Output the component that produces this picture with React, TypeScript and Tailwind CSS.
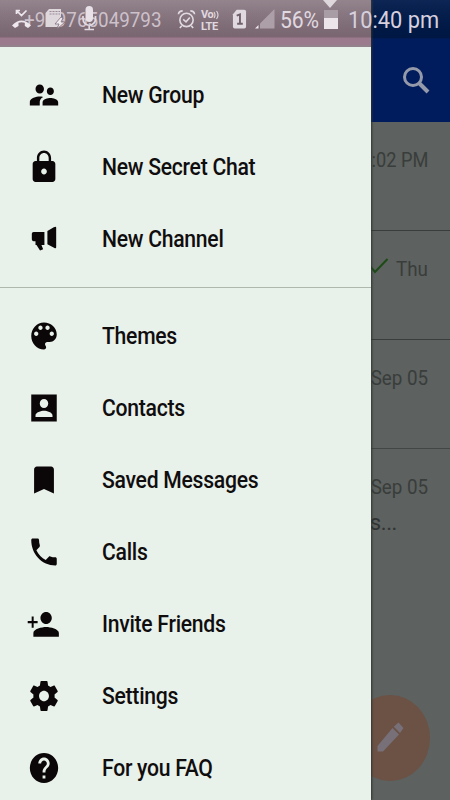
import React from 'react';

interface MenuEntry {
    label: string;
    path: string;
}

const chatEntries: MenuEntry[] = [
    {
        label: 'New Group',
        path: 'M16.5 12c1.38 0 2.49-1.12 2.49-2.5S17.88 7 16.5 7C15.12 7 14 8.12 14 9.5s1.12 2.5 2.5 2.5zM9 11c1.66 0 2.99-1.34 2.99-3S10.66 5 9 5C7.34 5 6 6.34 6 8s1.34 3 3 3zm7.5 3c-1.83 0-5.5.92-5.5 2.75V19h11v-2.25c0-1.83-3.67-2.75-5.5-2.75zM9 13c-2.33 0-7 1.17-7 3.5V19h7v-2.25c0-.85.33-2.34 2.37-3.47C10.5 13.1 9.66 13 9 13z',
    },
    {
        label: 'New Secret Chat',
        path: 'M18 8h-1V6c0-2.76-2.24-5-5-5S7 3.24 7 6v2H6c-1.1 0-2 .9-2 2v10c0 1.1.9 2 2 2h12c1.1 0 2-.9 2-2V10c0-1.1-.9-2-2-2zm-6 9c-1.1 0-2-.9-2-2s.9-2 2-2 2 .9 2 2-.9 2-2 2zM15.3 8H8.7V6c0-1.82 1.48-3.3 3.3-3.3s3.3 1.48 3.3 3.3v2z',
    },
    {
        label: 'New Channel',
        path: 'M4.7 7.3H12.3V16H10.2L11.4 18.8L9.2 19.7L6.7 16H6V13.5H4.7C3.8 13.5 3.4 12.8 3.4 12V8.7C3.4 7.8 3.9 7.3 4.7 7.3zM14.4 6.7L18.9 4.2Q20.6 3.4 20.6 4.4V17.5Q20.6 18.4 19.4 18L14.4 15.5z',
    },
];

const accountEntries: MenuEntry[] = [
    {
        label: 'Themes',
        path: 'M12 3c-4.97 0-9 4.03-9 9s4.03 9 9 9c.83 0 1.5-.67 1.5-1.5 0-.39-.15-.74-.39-1.01-.23-.26-.38-.61-.38-.99 0-.83.67-1.5 1.5-1.5H16c2.76 0 5-2.24 5-5 0-4.42-4.03-8-9-8zm-5.5 9c-.83 0-1.5-.67-1.5-1.5S5.67 9 6.5 9 8 9.67 8 10.5 7.33 12 6.5 12zm3-4C8.67 8 8 7.33 8 6.5S8.67 5 9.5 5s1.5.67 1.5 1.5S10.33 8 9.5 8zm5 0c-.83 0-1.5-.67-1.5-1.5S13.67 5 14.5 5s1.5.67 1.5 1.5S15.33 8 14.5 8zm3 4c-.83 0-1.5-.67-1.5-1.5S16.67 9 17.5 9s1.5.67 1.5 1.5-.67 1.5-1.5 1.5z',
    },
    {
        label: 'Contacts',
        path: 'M3 3h18v18H3zM15 9c0 1.66-1.34 3-3 3s-3-1.34-3-3 1.34-3 3-3 3 1.34 3 3zM6 17c0-2 4-3.1 6-3.1s6 1.1 6 3.1v1H6v-1z',
    },
    {
        label: 'Saved Messages',
        path: 'M17 3H7c-1.1 0-1.99.9-1.99 2L5 21l7-3 7 3V5c0-1.1-.9-2-2-2z',
    },
    {
        label: 'Calls',
        path: 'M6.62 10.79c1.44 2.83 3.76 5.14 6.59 6.59l2.2-2.2c.27-.27.67-.36 1.02-.24 1.12.37 2.33.57 3.57.57.55 0 1 .45 1 1V20c0 .55-.45 1-1 1-9.39 0-17-7.61-17-17 0-.55.45-1 1-1h3.5c.55 0 1 .45 1 1 0 1.25.2 2.45.57 3.57.11.35.03.74-.25 1.02l-2.2 2.2z',
    },
    {
        label: 'Invite Friends',
        path: 'M13.5 12c2.21 0 4-1.79 4-4s-1.79-4-4-4-4 1.79-4 4 1.79 4 4 4zM4.7 10V7H3.3v3H.5v1.5h2.8v3h1.4v-3h2.8V10zM13.5 14c-3 0-9 1.34-9 4v2.5h18V18c0-2.66-6-4-9-4z',
    },
    {
        label: 'Settings',
        path: 'M19.43 12.98c.04-.32.07-.64.07-.98s-.03-.66-.07-.98l2.11-1.65c.19-.15.24-.42.12-.64l-2-3.46c-.12-.22-.39-.3-.61-.22l-2.49 1c-.52-.4-1.08-.73-1.69-.98l-.38-2.65C14.46 2.18 14.25 2 14 2h-4c-.25 0-.46.18-.49.42l-.38 2.65c-.61.25-1.17.59-1.69.98l-2.49-1c-.23-.09-.49 0-.61.22l-2 3.46c-.13.22-.07.49.12.64l2.11 1.65c-.04.32-.07.65-.07.98s.03.66.07.98l-2.11 1.65c-.19.15-.24.42-.12.64l2 3.46c.12.22.39.3.61.22l2.49-1c.52.4 1.08.73 1.69.98l.38 2.65c.03.24.24.42.49.42h4c.25 0 .46-.18.49-.42l.38-2.65c.61-.25 1.17-.59 1.69-.98l2.49 1c.23.09.49 0 .61-.22l2-3.46c.12-.22.07-.49-.12-.64l-2.11-1.65zM12 15.5c-1.93 0-3.5-1.57-3.5-3.5s1.57-3.5 3.5-3.5 3.5 1.57 3.5 3.5-1.57 3.5-3.5 3.5z',
    },
    {
        label: 'For you FAQ',
        path: 'M12 2C6.48 2 2 6.48 2 12s4.48 10 10 10 10-4.48 10-10S17.52 2 12 2zm1 17h-2v-2h2v2zm2.07-7.75l-.9.92C13.45 12.9 13 13.5 13 15h-2v-.5c0-1.1.45-2.1 1.17-2.83l1.24-1.26c.37-.36.59-.86.59-1.41 0-1.1-.9-2-2-2s-2 .9-2 2H8c0-2.21 1.79-4 4-4s4 1.79 4 4c0 .88-.36 1.68-.93 2.25z',
    },
];

const MenuRow: React.FC<MenuEntry> = ({ label, path }) => (
    <li className="flex h-[72px] items-center pl-[27px]">
        <svg viewBox="0 0 24 24" preserveAspectRatio="none" className="h-[36px] w-[34px] fill-[#0b0708]">
            <path fillRule="evenodd" d={path} />
        </svg>
        <span className="ml-[41px] origin-left scale-x-[0.92] text-[23px] leading-none font-medium tracking-[-0.3px] whitespace-nowrap text-[#100d0e]">
            {label}
        </span>
    </li>
);

const StatusBar: React.FC = () => (
    <div className="absolute inset-x-0 top-0 flex h-[38px] items-center bg-linear-to-b from-white/5 to-black/10 text-[#e0d9e0]">
        {/* notification icons crowd over the number */}
        <div className="relative ml-[24px] w-[153px] shrink-0">
            <span className="block origin-left scale-x-[0.94] pt-[2px] text-[20px] leading-[38px] whitespace-nowrap text-[#cdc1cb]">+919765049793</span>
            <svg viewBox="0 0 90 30" className="absolute top-[6px] -left-[14px] h-[30px] w-[90px]">
                <path d="M2 20.5Q11.5 10.5 21 20.5L18 23L14.8 21V17.8Q11.5 16.8 8.5 17.8V21L5 23z" fill="#eee8ee" />
                <path d="M6.5 5.5L11.5 10.5L16.5 5.5M6.5 9V5.5H10" fill="none" stroke="#eee8ee" strokeWidth="1.7" />
                <path d="M39 4H51V15L53 18L47 22H35.5V8z" fill="#ded7dc" />
                <path d="M39.5 6.5H50M39.5 9H50" stroke="#9c8b96" strokeWidth="1" strokeDasharray="2 1" />
                <path d="M51 12L45 19H49L47 24L55 17H51L53 13z" fill="#f1ebf0" stroke="#806f7b" strokeWidth=".8" />
                <rect x="75.5" y="1" width="7.5" height="16" rx="3.7" fill="#e8e1e7" />
                <path d="M73 11V14A6 6 0 0 0 85.5 14V11M79.2 20V24.5M74.5 24.5H84" fill="none" stroke="#e2dae1" strokeWidth="1.7" />
            </svg>
        </div>
        <svg viewBox="0 0 20 22" className="h-[22px] w-[19px] shrink-0 fill-none stroke-current" strokeWidth="1.7">
            <circle cx="10" cy="12" r="7" />
            <path d="M6.5 11.5L9.5 14L13.5 9.5M1.5 6Q2 2.5 6 2.5M14 2.5Q18 2.5 18.5 6M5 18L3 20.5M15 18L17 20.5" />
        </svg>
        <div className="ml-[5px] flex w-[20px] shrink-0 flex-col pt-[3px] text-[11px] font-bold">
            <div className="flex h-[12px] items-center leading-[12px]">
                <span className="tracking-[-0.5px]">Vo</span>
                <svg viewBox="0 0 7 10" className="h-[10px] w-[7px] fill-none stroke-current" strokeWidth="1.1">
                    <path d="M1 2Q3 5 1 8M3.5 1Q6.5 5 3.5 9" />
                </svg>
            </div>
            <div className="h-[12px] leading-[12px] tracking-[-0.3px]">LTE</div>
        </div>
        <svg viewBox="0 0 16 22" className="ml-[11px] h-[22px] w-[15px] shrink-0">
            <path d="M5 1H13Q15 1 15 3V19Q15 21 13 21H3Q1 21 1 19V6z" fill="currentColor" />
            <path d="M5 7.5L8.5 6V16M5.5 16H11.5" fill="none" stroke="#70606b" strokeWidth="2" />
        </svg>
        <svg viewBox="0 0 20 20" className="ml-[8px] h-[20px] w-[20px] shrink-0">
            <path d="M19.5 0V19.5H5V14.5z" fill="#ad9fa8" />
            <path d="M3.5 16V19.5H0z" fill="#eee7ed" />
        </svg>
        <span className="ml-[5px] w-[44px] shrink-0 origin-left scale-x-[0.92] pt-[2px] text-[23px] leading-none tracking-[-0.2px]">56%</span>
        <span className="mt-px flex h-[19px] w-[14px] shrink-0 items-end bg-[#a99da5]">
            <span className="h-[11px] w-full bg-[#ebe5e9]" />
        </span>
        <span className="ml-[10px] origin-left scale-x-[0.91] pt-[2px] text-[24px] leading-none whitespace-nowrap text-[#d6d0df]">10:40 pm</span>
        <svg viewBox="0 0 14 8" className="absolute top-0 left-[323px] h-[8px] w-[14px] fill-[#ded8dd]">
            <path d="M0 0H14L7 8z" />
        </svg>
    </div>
);

const Drawer: React.FC = () => (
    <nav className="relative z-10 flex w-[371px] shrink-0 flex-col bg-[#e8f1ea] shadow-[1px_0_2px_#303630]">
        <div className="h-[47px] shrink-0 border-b-2 border-[#93828c] bg-linear-to-b from-[#8e7e87] from-0% via-[#86717d] via-[81%] to-[#9c7a8e] to-[82%]" />
        <ul className="pt-[12px] pb-[12px]">
            {chatEntries.map((entry) => (
                <MenuRow key={entry.label} {...entry} />
            ))}
        </ul>
        <div className="h-px shrink-0 bg-[#aeb8ad]" />
        <ul className="pt-[12px]">
            {accountEntries.map((entry) => (
                <MenuRow key={entry.label} {...entry} />
            ))}
        </ul>
    </nav>
);

const ChatListEdge: React.FC = () => (
    <div className="relative flex min-w-0 flex-1 flex-col overflow-hidden bg-[#5d615f] text-[20px] leading-[24px] text-[#393d3b]">
        <header className="flex h-[122px] shrink-0 items-end justify-end bg-linear-to-b from-[#001a4b] from-[38px] to-[#001c5c] to-[39px] pr-[17px] pb-[25px]">
            <svg viewBox="0 0 34 34" className="h-[34px] w-[34px] fill-none stroke-[#959aaa]">
                <circle cx="14" cy="14" r="8.5" strokeWidth="3" />
                <path d="M20 20L29 29" strokeWidth="4" />
            </svg>
        </header>
        <div className="flex h-[109px] shrink-0 justify-end border-b border-[#393d3b] pt-[26px] pr-[22px]">
            <span className="origin-right scale-x-[0.91] whitespace-nowrap">:02 PM</span>
        </div>
        <div className="flex h-[109px] shrink-0 justify-end border-b border-[#393d3b] pt-[26px] pr-[22px]">
            <svg viewBox="0 0 20 18" className="mr-[5px] h-[18px] w-[20px] shrink-0 fill-none stroke-[#1d4a17]" strokeWidth="2">
                <path d="M1 9L6 15L18.5 2" />
            </svg>
            <span className="origin-right scale-x-[0.94]">Thu</span>
        </div>
        <div className="flex h-[109px] shrink-0 justify-end border-b border-[#424644] pt-[26px] pr-[22px]">
            <span className="origin-right scale-x-[0.94] whitespace-nowrap">Sep 05</span>
        </div>
        <div className="flex shrink-0 flex-col items-end pt-[26px] pr-[22px]">
            <span className="origin-right scale-x-[0.94] whitespace-nowrap">Sep 05</span>
            <span className="mt-[12px] mr-[31px] origin-right text-[22px] tracking-[-0.4px] text-[#303432]">s...</span>
        </div>
        <div className="absolute top-[695px] right-[20px] flex h-[86px] w-[80px] items-center justify-center rounded-[50%] bg-[#6c5145]">
            <svg viewBox="0 0 30 34" className="h-[34px] w-[30px] fill-[#777078]">
                <path d="M2.5 25L17.5 7L24 13.5L8 30.5H2.5zM18.8 5.8L23.5 1.5L28.5 7L25 12z" />
            </svg>
        </div>
    </div>
);

export default function App() {
    return (
        <div className="relative flex h-[800px] w-[450px] overflow-hidden font-[Roboto,'Noto_Sans',sans-serif]">
            <Drawer />
            <ChatListEdge />
            <div className="absolute inset-x-0 top-0 z-20">
                <StatusBar />
            </div>
        </div>
    );
}
